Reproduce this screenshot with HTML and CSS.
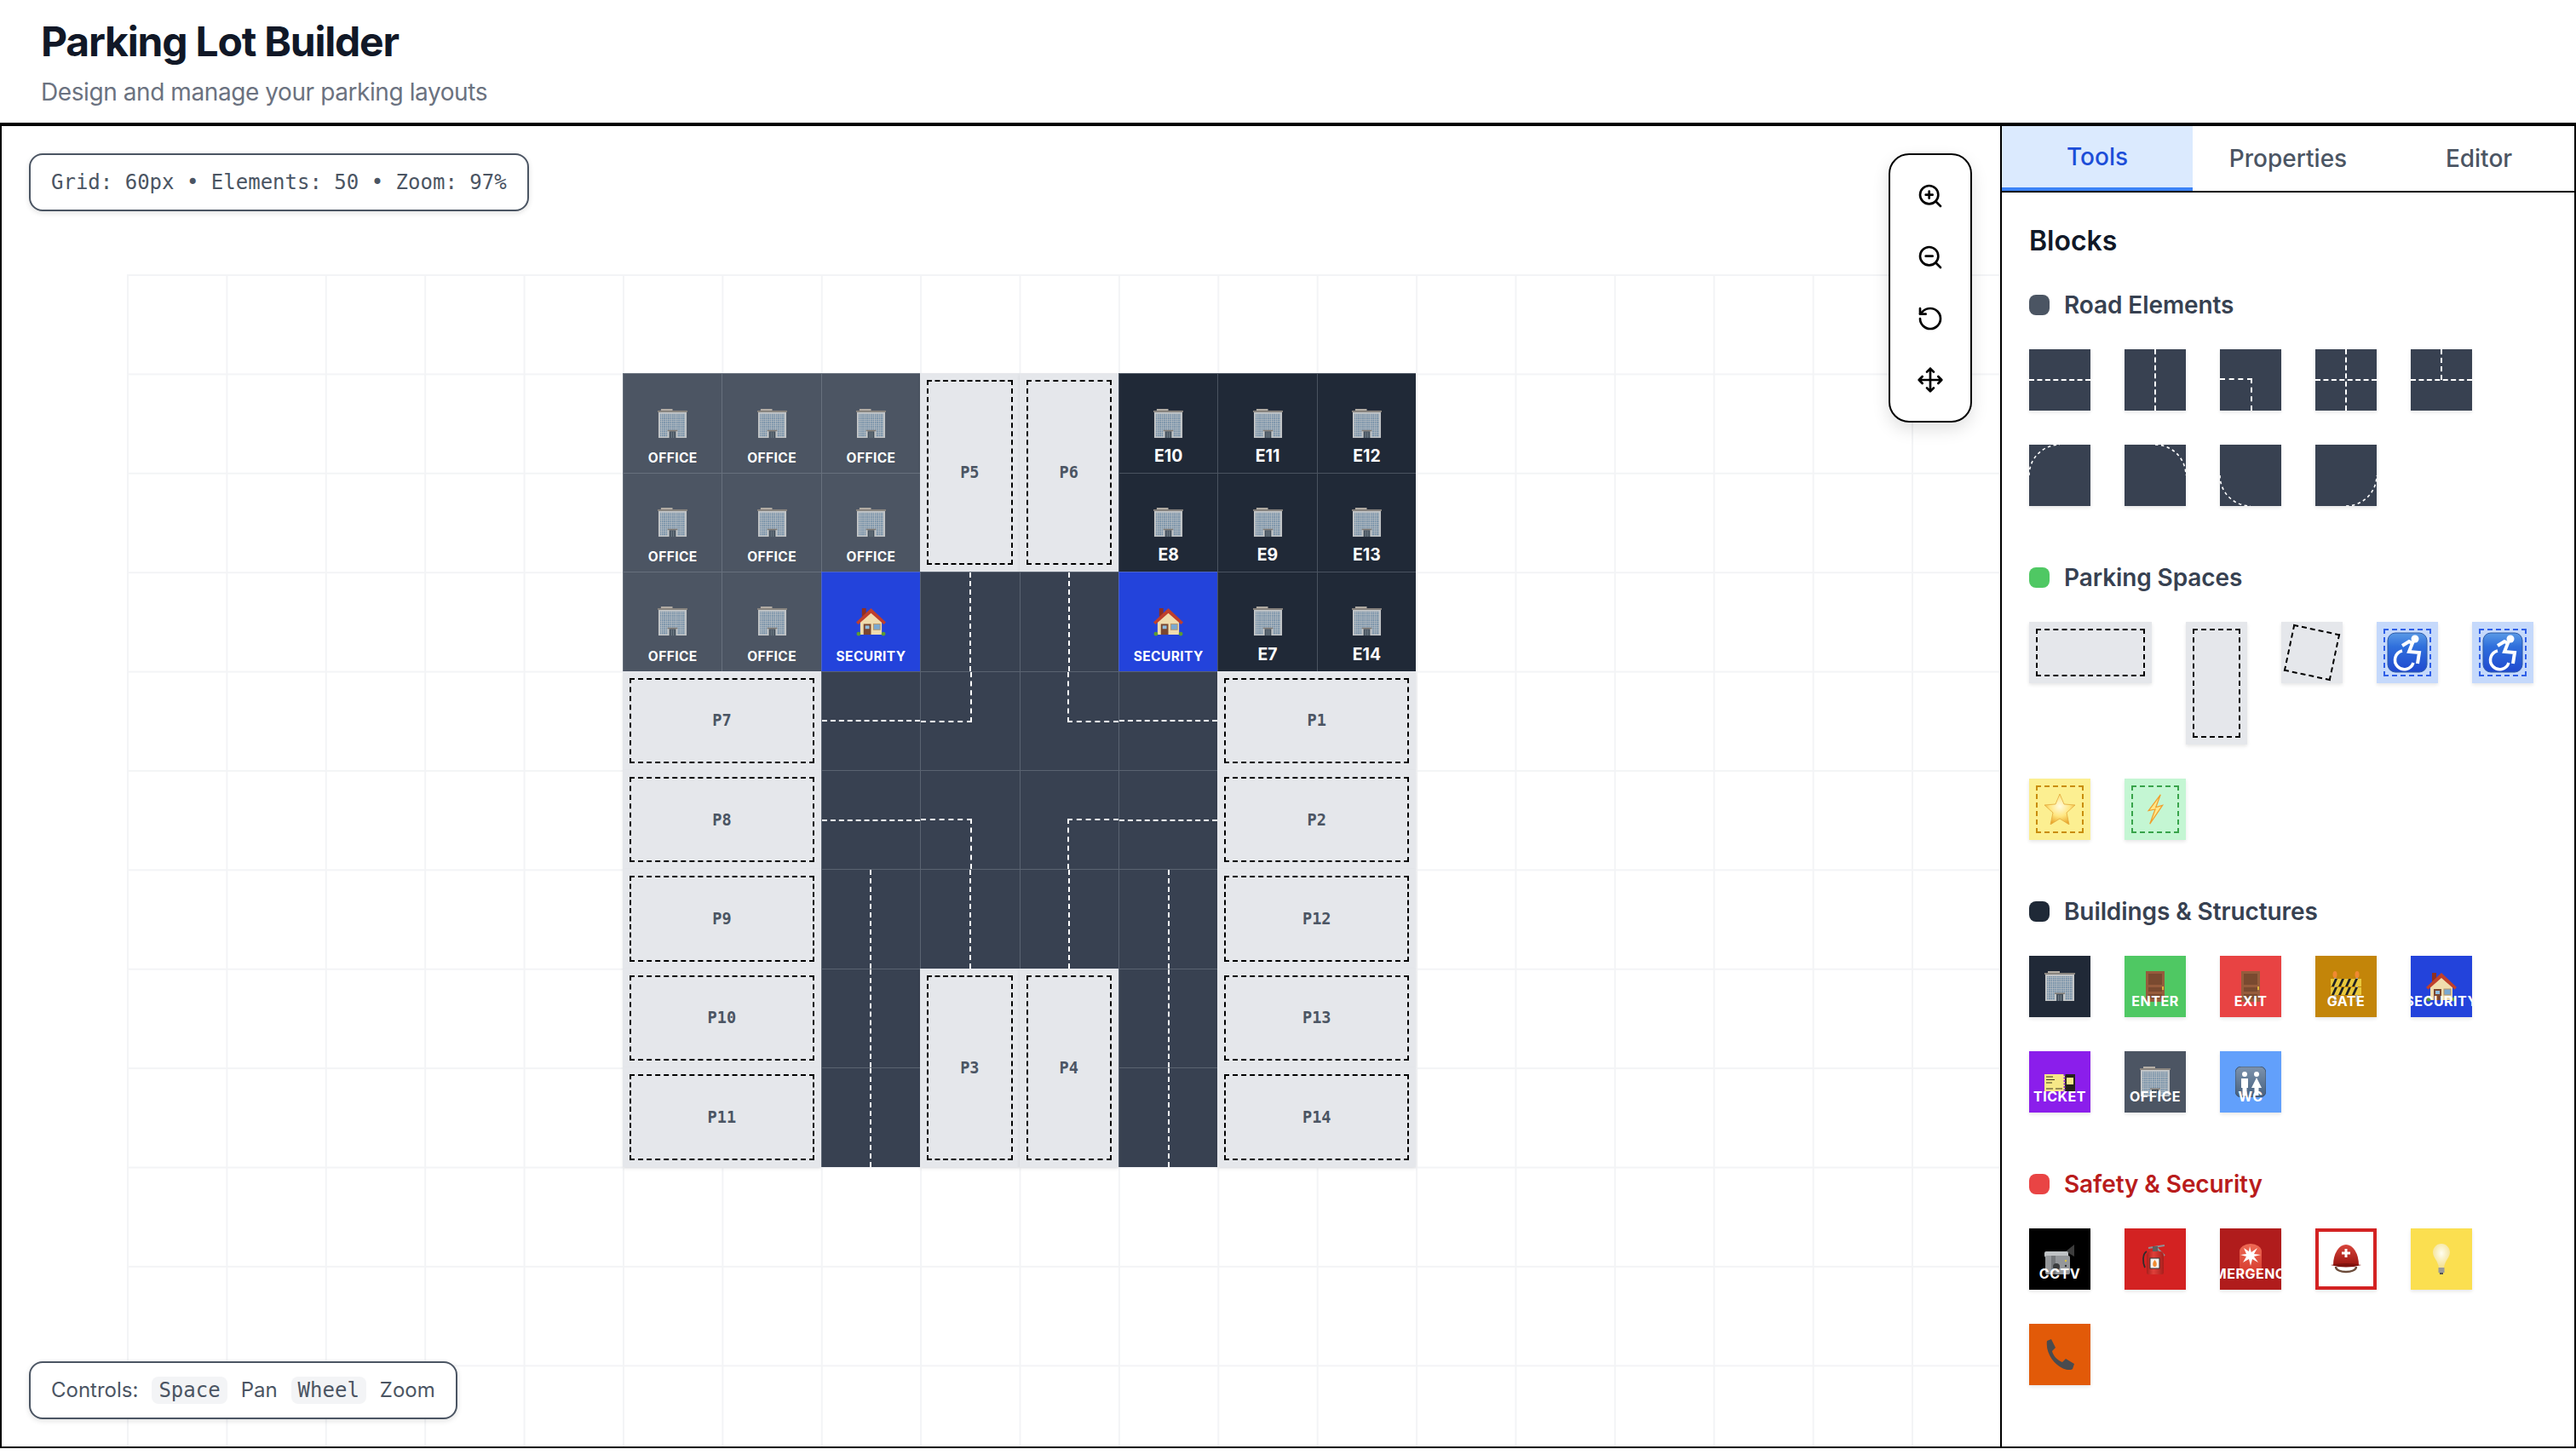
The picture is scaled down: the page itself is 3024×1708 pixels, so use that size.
FILE: index.html
```html
<!DOCTYPE html>
<html lang="en">
<head>
<meta charset="UTF-8">
<title>Parking Lot Builder</title>
<meta name="viewport" content="width=device-width, initial-scale=1.0">
<link rel="stylesheet" href="styles.css">
</head>
<body>

<!-- emoji drawings, reused below -->
<svg class="defs" aria-hidden="true">
  <defs>
    <pattern id="win" width="2.5" height="2.6" patternUnits="userSpaceOnUse"><rect width="1.9" height="2" fill="#7590a8"/></pattern>
    <linearGradient id="gblue" x1="0" y1="0" x2="0" y2="1"><stop offset="0" stop-color="#5a9ae6"/><stop offset=".35" stop-color="#2f6fdc"/><stop offset="1" stop-color="#2049cf"/></linearGradient>
    <linearGradient id="gwc" x1="0" y1="0" x2="0" y2="1"><stop offset="0" stop-color="#7d93ad"/><stop offset="1" stop-color="#46607e"/></linearGradient>
    <radialGradient id="gstar" cx=".5" cy=".4" r=".6"><stop offset="0" stop-color="#fffbe0"/><stop offset=".55" stop-color="#ffe680"/><stop offset="1" stop-color="#e9a52a"/></radialGradient>
    <radialGradient id="gbulb" cx=".5" cy=".4" r=".6"><stop offset="0" stop-color="#fffef0"/><stop offset="1" stop-color="#f3e08e"/></radialGradient>
    <linearGradient id="gsiren" x1="0" y1="0" x2="0" y2="1"><stop offset="0" stop-color="#ee6a55"/><stop offset="1" stop-color="#d5392c"/></linearGradient>
    <linearGradient id="ghelm" x1="0" y1="0" x2="0" y2="1"><stop offset="0" stop-color="#d8453c"/><stop offset="1" stop-color="#9c1712"/></linearGradient>
    <linearGradient id="gfire" x1="0" y1="0" x2="1" y2="0"><stop offset="0" stop-color="#a81f1c"/><stop offset=".4" stop-color="#e0403a"/><stop offset="1" stop-color="#a81f1c"/></linearGradient>
  </defs>
  <symbol id="i-office" viewBox="0 0 36 36">
    <rect x="4" width="14" height="2" fill="#b5afa6"/>
    <rect y="2" width="36" height="2" fill="#8a857f"/>
    <rect x="1" y="4" width="34" height="31" fill="#c2c5c7"/>
    <rect x="3" y="6" width="30" height="20" fill="url(#win)"/>
    <rect x="3" y="26" width="9" height="8" fill="url(#win)"/>
    <rect x="24" y="26" width="9" height="8" fill="url(#win)"/>
    <rect x="14" y="27" width="8" height="8" fill="#46525e"/>
    <rect x="12" y="25.500" width="12" height="1.500" fill="#7d7974"/>
    <path d="M16.700 28v7M19.300 28v7" stroke="#9aa6b0" stroke-width=".6"/>
  </symbol>
  <symbol id="i-house" viewBox="0 0 36 36">
    <rect x="7" y="2" width="5" height="10" fill="#8e2f22"/>
    <path d="M5 18v16h26V18L18 7z" fill="#f0dcae"/>
    <path d="M0 19L18 2l18 17-2.500 2.500L18 8 2.500 21.500z" fill="#bf3f2c"/>
    <rect x="9" y="21" width="9" height="13" fill="#7a4630"/>
    <rect x="11" y="23" width="5" height="4" fill="#8fbde0"/>
    <rect x="21" y="21" width="8" height="7" fill="#7aa9d2" stroke="#b4946a"/>
    <circle cx="3" cy="33" r="2.500" fill="#5c9a32"/>
    <circle cx="33" cy="33" r="2.500" fill="#5c9a32"/>
  </symbol>
  <symbol id="i-door" viewBox="0 0 36 36">
    <rect x="7" width="22" height="36" fill="#965c3c"/>
    <rect x="10" y="3" width="16" height="13" fill="#7a4a30"/>
    <rect x="10" y="19" width="16" height="5" fill="#7a4a30"/>
    <rect x="10" y="27" width="16" height="5" fill="#7a4a30"/>
    <rect x="26" y="18" width="2" height="4" fill="#e0b23c"/>
  </symbol>
  <symbol id="i-gate" viewBox="0 0 36 36">
    <ellipse cx="5" cy="4" rx="2.500" ry="4" fill="#f08a30"/>
    <ellipse cx="31" cy="4" rx="2.500" ry="4" fill="#f08a30"/>
    <rect x="4" y="8" width="2.500" height="28" fill="#a8a8a8"/>
    <rect x="29.500" y="8" width="2.500" height="28" fill="#a8a8a8"/>
    <rect y="9" width="36" height="9" fill="#e9c83c"/>
    <rect y="19" width="36" height="9" fill="#e9c83c"/>
    <path d="M1 18l4-9h3l-4 9zM9 18l4-9h3l-4 9zM17 18l4-9h3l-4 9zM25 18l4-9h3l-4 9zM1 28l4-9h3l-4 9zM9 28l4-9h3l-4 9zM17 28l4-9h3l-4 9zM25 28l4-9h3l-4 9z" fill="#222"/>
  </symbol>
  <symbol id="i-ticket" viewBox="0 0 36 36">
    <rect y="9" width="36" height="20" fill="#f6e887"/>
    <rect x="24" y="9" width="12" height="20" fill="#26231c"/>
    <rect x="26" y="13" width="8" height="8" fill="#f6e887"/>
    <path d="M2 12h8M2 15.500h10M2 19h7M2 26h8M13 26h8" stroke="#3a3420" stroke-width="1.200"/>
    <path d="M23.500 9v20" stroke="#8b2bd6" stroke-width="2" stroke-dasharray="2 1.500"/>
  </symbol>
  <symbol id="i-wc" viewBox="0 0 36 36">
    <rect width="36" height="36" rx="7" fill="url(#gwc)" stroke="#3d5068"/>
    <circle cx="11" cy="9" r="3" fill="#fff"/>
    <circle cx="25" cy="9" r="3" fill="#fff"/>
    <path d="M7 14h8v11h-1.500v9h-5v-9H7zM25 13l6 12h-3.500v9h-5v-9H19z" fill="#fff"/>
  </symbol>
  <symbol id="i-cctv" viewBox="0 0 36 36">
    <path d="M25 9l10-8v14z" fill="#3d3d3d"/>
    <rect y="9" width="28" height="7" rx="2" fill="#bfc2c4"/>
    <rect x="1" y="14" width="29" height="22" rx="2" fill="#94979a"/>
    <rect x="8" y="14" width="5" height="22" fill="#75787b"/>
    <circle cx="14" cy="27" r="4" fill="#3a3c3e"/>
    <circle cx="25" cy="20" r="1.200" fill="#d9c240"/>
    <circle cx="25" cy="26" r="1.200" fill="#333"/>
  </symbol>
  <symbol id="i-fire" viewBox="0 0 36 36">
    <path d="M8 9C3 12 3 22 6 28" stroke="#2d2d2d" stroke-width="1.800" fill="none"/>
    <path d="M10 5L29 2 M20 5l9 9" stroke="#8e9296" stroke-width="2.200" fill="none"/>
    <rect x="15" y="3" width="6" height="6" fill="#5e5e5e"/>
    <path d="M8 14a4 5 0 0 1 4-5h12a4 5 0 0 1 4 5v20a2 2 0 0 1-2 2H10a2 2 0 0 1-2-2z" fill="url(#gfire)"/>
    <rect x="12" y="17" width="11" height="12" fill="#f5f2ee" stroke="#333"/>
    <path d="M17.500 19c3 3 3 8 0 8s-3-5 0-8z" fill="#ee8a2f"/>
  </symbol>
  <symbol id="i-siren" viewBox="0 0 36 36">
    <path d="M5 9a13 9 0 0 1 26 0v27H5z" fill="url(#gsiren)"/>
    <path d="M17 3l1.800 7 7.200-5-4 7 8 1-8 2 5 7-7-4-2 8-2-8-7 4 4-7-7-2 7-1-3-7 6 4z" fill="#fff"/>
  </symbol>
  <symbol id="i-helmet" viewBox="0 0 36 36">
    <path d="M6 27c0 8 24 8 24 0" stroke="#6b4b3a" stroke-width="2.400" fill="none"/>
    <path d="M3 25a15 24 0 0 1 30 0z" fill="url(#ghelm)"/>
    <path d="M0 25q18-4 36 0q-18 5-36 0z" fill="#7f120e"/>
    <path d="M16.500 6h3v3.500H23v3h-3.500V16h-3v-3.500H13v-3h3.500z" fill="#fff"/>
  </symbol>
  <symbol id="i-bulb" viewBox="0 0 36 36">
    <path d="M18 0c-6 0-10 5-10 10 0 6 6 10 7 18h6c1-8 7-12 7-18 0-5-4-10-10-10z" fill="url(#gbulb)"/>
    <rect x="14.500" y="28" width="7" height="6" fill="#9a9a9a"/>
    <rect x="16" y="34" width="4" height="2" fill="#555"/>
  </symbol>
  <symbol id="i-phone" viewBox="0 0 36 36">
    <path d="M3 2L8 0l5 10-4 4c1 5 6 11 12 13l4-4 10 6-2 6c-3 2-8 1-12-1C11 29 1 16 3 2z" fill="#4a4b4e"/>
  </symbol>
  <symbol id="i-access" viewBox="0 0 48 48">
    <rect x="1" y="1" width="46" height="46" rx="9" fill="url(#gblue)" stroke="#2c5aa8"/>
    <circle cx="33" cy="8" r="4.500" fill="#fff"/>
    <path d="M18 16l8-5 4 2-4 10 12 1-2 13" stroke="#fff" stroke-width="4" fill="none"/>
    <path d="M18 22a11 11 0 1 0 13 14" stroke="#fff" stroke-width="3.500" fill="none"/>
  </symbol>
  <symbol id="i-star" viewBox="0 0 36 36">
    <path d="M18 0l5 12 13 1-10 9 3 14-11-7-11 7 3-14L0 13l13-1z" fill="url(#gstar)" stroke="#e2a83c" stroke-width=".8"/>
  </symbol>
  <symbol id="i-bolt" viewBox="0 0 24 46">
    <path d="M20 1L2 25l10-2-8 22L23 17l-10 3z" fill="#ffe88a" stroke="#ef9f2e" stroke-width="1.600"/>
  </symbol>
</svg>

<header class="page-header">
  <h1 class="page-title">Parking Lot Builder</h1>
  <p class="page-sub">Design and manage your parking layouts</p>
</header>

<main class="workspace">
  <section class="canvas">
    <div class="grid-bg">
      <div class="lot">
        <div class="cell office"><svg class="emoji"><use href="#i-office"/></svg><span class="cell-label">OFFICE</span></div>
        <div class="cell office"><svg class="emoji"><use href="#i-office"/></svg><span class="cell-label">OFFICE</span></div>
        <div class="cell office"><svg class="emoji"><use href="#i-office"/></svg><span class="cell-label">OFFICE</span></div>
        <div class="cell spot tall">P5</div>
        <div class="cell spot tall">P6</div>
        <div class="cell building"><svg class="emoji"><use href="#i-office"/></svg><span class="cell-label big">E10</span></div>
        <div class="cell building"><svg class="emoji"><use href="#i-office"/></svg><span class="cell-label big">E11</span></div>
        <div class="cell building"><svg class="emoji"><use href="#i-office"/></svg><span class="cell-label big">E12</span></div>

        <div class="cell office"><svg class="emoji"><use href="#i-office"/></svg><span class="cell-label">OFFICE</span></div>
        <div class="cell office"><svg class="emoji"><use href="#i-office"/></svg><span class="cell-label">OFFICE</span></div>
        <div class="cell office"><svg class="emoji"><use href="#i-office"/></svg><span class="cell-label">OFFICE</span></div>
        <div class="cell building"><svg class="emoji"><use href="#i-office"/></svg><span class="cell-label big">E8</span></div>
        <div class="cell building"><svg class="emoji"><use href="#i-office"/></svg><span class="cell-label big">E9</span></div>
        <div class="cell building"><svg class="emoji"><use href="#i-office"/></svg><span class="cell-label big">E13</span></div>

        <div class="cell office"><svg class="emoji"><use href="#i-office"/></svg><span class="cell-label">OFFICE</span></div>
        <div class="cell office"><svg class="emoji"><use href="#i-office"/></svg><span class="cell-label">OFFICE</span></div>
        <div class="cell security"><svg class="emoji"><use href="#i-house"/></svg><span class="cell-label">SECURITY</span></div>
        <div class="cell road"><i class="mark-v"></i></div>
        <div class="cell road"><i class="mark-v"></i></div>
        <div class="cell security"><svg class="emoji"><use href="#i-house"/></svg><span class="cell-label">SECURITY</span></div>
        <div class="cell building"><svg class="emoji"><use href="#i-office"/></svg><span class="cell-label big">E7</span></div>
        <div class="cell building"><svg class="emoji"><use href="#i-office"/></svg><span class="cell-label big">E14</span></div>

        <div class="cell spot wide">P7</div>
        <div class="cell road"><i class="mark-h"></i></div>
        <div class="cell road"><i class="mark-tl"></i></div>
        <div class="cell road"><i class="mark-tr"></i></div>
        <div class="cell road"><i class="mark-h"></i></div>
        <div class="cell spot wide">P1</div>

        <div class="cell spot wide">P8</div>
        <div class="cell road"><i class="mark-h"></i></div>
        <div class="cell road"><i class="mark-bl"></i></div>
        <div class="cell road"><i class="mark-br"></i></div>
        <div class="cell road"><i class="mark-h"></i></div>
        <div class="cell spot wide">P2</div>

        <div class="cell spot wide">P9</div>
        <div class="cell road"><i class="mark-v"></i></div>
        <div class="cell road"><i class="mark-v"></i></div>
        <div class="cell road"><i class="mark-v"></i></div>
        <div class="cell road"><i class="mark-v"></i></div>
        <div class="cell spot wide">P12</div>

        <div class="cell spot wide">P10</div>
        <div class="cell road"><i class="mark-v"></i></div>
        <div class="cell spot tall">P3</div>
        <div class="cell spot tall">P4</div>
        <div class="cell road"><i class="mark-v"></i></div>
        <div class="cell spot wide">P13</div>

        <div class="cell spot wide">P11</div>
        <div class="cell road"><i class="mark-v"></i></div>
        <div class="cell road"><i class="mark-v"></i></div>
        <div class="cell spot wide">P14</div>
      </div>
    </div>

    <div class="pill pill-info">Grid: 60px • Elements: 50 • Zoom: 97%</div>

    <div class="zoom-bar">
      <button class="zoom-btn"><svg viewBox="0 0 24 24"><circle cx="11" cy="11" r="8"/><path d="M21 21l-4.350-4.350M11 8v6M8 11h6"/></svg></button>
      <button class="zoom-btn"><svg viewBox="0 0 24 24"><circle cx="11" cy="11" r="8"/><path d="M21 21l-4.350-4.350M8 11h6"/></svg></button>
      <button class="zoom-btn"><svg viewBox="0 0 24 24"><path d="M3 12a9 9 0 1 0 9-9 9.750 9.750 0 0 0-6.740 2.740L3 8"/><path d="M3 3v5h5"/></svg></button>
      <button class="zoom-btn"><svg viewBox="0 0 24 24"><path d="M5 9l-3 3 3 3M9 5l3-3 3 3M15 19l-3 3-3-3M19 9l3 3-3 3M2 12h20M12 2v20"/></svg></button>
    </div>

    <div class="pill pill-controls">
      <span>Controls:</span><code class="key">Space</code><span>Pan</span><code class="key">Wheel</code><span>Zoom</span>
    </div>
  </section>

  <aside class="sidebar">
    <nav class="tabs">
      <div class="tab active">Tools</div>
      <div class="tab">Properties</div>
      <div class="tab">Editor</div>
    </nav>
    <div class="panel">
      <h2 class="panel-title">Blocks</h2>

      <h3 class="group-title"><span class="dot dot-road"></span>Road Elements</h3>
      <div class="blocks">
        <div class="block road"><i class="mark-h"></i></div>
        <div class="block road"><i class="mark-v"></i></div>
        <div class="block road"><i class="mark-bl"></i></div>
        <div class="block road"><i class="mark-h"></i><i class="mark-v"></i></div>
        <div class="block road"><i class="mark-h"></i><i class="mark-vtop"></i></div>
        <div class="block road"><svg class="curve" viewBox="0 0 72 72"><path d="M0 36A36 36 0 0 1 36 0"/></svg></div>
        <div class="block road"><svg class="curve" viewBox="0 0 72 72"><path d="M36 0A36 36 0 0 1 72 36"/></svg></div>
        <div class="block road"><svg class="curve" viewBox="0 0 72 72"><path d="M0 36A36 36 0 0 0 36 72"/></svg></div>
        <div class="block road"><svg class="curve" viewBox="0 0 72 72"><path d="M36 72A36 36 0 0 0 72 36"/></svg></div>
      </div>

      <h3 class="group-title"><span class="dot dot-park"></span>Parking Spaces</h3>
      <div class="blocks">
        <div class="block spot block-wide"></div>
        <div class="block spot block-tall"></div>
        <div class="block spot angled"></div>
        <div class="block spot accessible"><svg class="emoji-lg"><use href="#i-access"/></svg></div>
        <div class="block spot accessible"><svg class="emoji-lg"><use href="#i-access"/></svg></div>
        <div class="block spot vip"><svg class="emoji-sm"><use href="#i-star"/></svg></div>
        <div class="block spot ev"><svg class="emoji-sm"><use href="#i-bolt"/></svg></div>
      </div>

      <h3 class="group-title"><span class="dot dot-build"></span>Buildings &amp; Structures</h3>
      <div class="blocks">
        <div class="block building"><svg class="emoji-sm"><use href="#i-office"/></svg></div>
        <div class="block enter"><svg class="emoji-sm"><use href="#i-door"/></svg><span class="block-label">ENTER</span></div>
        <div class="block exit"><svg class="emoji-sm"><use href="#i-door"/></svg><span class="block-label">EXIT</span></div>
        <div class="block gate"><svg class="emoji-sm"><use href="#i-gate"/></svg><span class="block-label">GATE</span></div>
        <div class="block security"><svg class="emoji-sm"><use href="#i-house"/></svg><span class="block-label">SECURITY</span></div>
        <div class="block ticket"><svg class="emoji-sm"><use href="#i-ticket"/></svg><span class="block-label">TICKET</span></div>
        <div class="block office"><svg class="emoji-sm"><use href="#i-office"/></svg><span class="block-label">OFFICE</span></div>
        <div class="block wc"><svg class="emoji-sm"><use href="#i-wc"/></svg><span class="block-label">WC</span></div>
      </div>

      <h3 class="group-title danger"><span class="dot dot-safe"></span>Safety &amp; Security</h3>
      <div class="blocks">
        <div class="block cctv"><svg class="emoji-sm"><use href="#i-cctv"/></svg><span class="block-label">CCTV</span></div>
        <div class="block fire"><svg class="emoji-sm"><use href="#i-fire"/></svg></div>
        <div class="block emergency"><svg class="emoji-sm"><use href="#i-siren"/></svg><span class="block-label">EMERGENCY</span></div>
        <div class="block firstaid"><svg class="emoji-sm"><use href="#i-helmet"/></svg></div>
        <div class="block light"><svg class="emoji-sm"><use href="#i-bulb"/></svg></div>
        <div class="block phone"><svg class="emoji-sm"><use href="#i-phone"/></svg></div>
      </div>
    </div>
  </aside>
</main>

</body>
</html>
```

FILE: styles.css
```css
body {
  margin: 0;
  background-color: #fff;
  font-family: Inter, "Noto Sans", sans-serif;
  color: #111827;
}
.defs {
  position: absolute;
  width: 0;
  height: 0;
}

/* header */
.page-header {
  height: 112px;
  padding: 17px 48px 15px;
  border-bottom: 2px solid #000;
}
.page-title {
  margin: 0;
  font-size: 48px;
  line-height: 64px;
  font-weight: 700;
  letter-spacing: -1.2px;
}
.page-sub {
  margin: 7px 0 0;
  font-size: 28px;
  line-height: 40px;
  letter-spacing: -0.42px;
  color: #6b7280;
}

/* main */
.workspace {
  display: flex;
  height: 1550px;
  border: 2px solid #000;
}
.canvas {
  position: relative;
  flex: 1;
  overflow: hidden;
}
.grid-bg {
  position: absolute;
  left: 147px;
  top: 174px;
  right: 0;
  bottom: 0;
  padding: 116.4px 0 0 582px;
  background-image: linear-gradient(#f3f4f6 2px, transparent 2px), linear-gradient(90deg, #f3f4f6 2px, transparent 2px);
  background-size: 116.4px 116.4px;
}
.lot {
  display: grid;
  grid-template-columns: repeat(8, 116.4px);
  grid-auto-rows: 116.4px;
}

.cell {
  position: relative;
  box-sizing: border-box;
  display: flex;
  align-items: center;
  justify-content: center;
  border-style: solid;
  border-width: 1px 0 0 1px;
  border-color: rgba(156, 163, 175, 0.35);
}
.cell.spot { border: none; }
.cell.wide { grid-column: span 2; }
.cell.tall { grid-row: span 2; }
.emoji {
  width: 35px;
  height: 35px;
}
.cell-label {
  position: absolute;
  left: 0;
  right: 0;
  bottom: 7px;
  text-align: center;
  font-size: 15.5px;
  line-height: 20px;
  font-weight: 700;
  letter-spacing: 0.4px;
  color: #fff;
}
.cell-label.big {
  font-size: 19.4px;
  bottom: 10px;
  letter-spacing: 0;
}

/* shared colours */
.office { background-color: #4c5563; }
.building { background-color: #202937; }
.security { background-color: #2343db; }
.road { background-color: #384151; }

.spot {
  position: relative;
  background-color: #e5e7eb;
  font-family: "DejaVu Sans Mono", monospace;
  font-size: 18.6px;
  font-weight: 700;
  color: #4b5563;
  box-shadow: 0 2px 4px rgba(0, 0, 0, 0.08);
}
.spot::before {
  content: "";
  position: absolute;
  inset: 8px;
  border: 2px dashed #000;
}

/* road markings */
.road { position: relative; overflow: hidden; }
.road i { position: absolute; box-sizing: content-box; }
.mark-h {
  left: 0;
  right: 0;
  top: calc(50% - 1px);
  border-top: 2px dashed #fff;
}
.mark-v {
  top: 0;
  bottom: 0;
  left: calc(50% - 1px);
  border-left: 2px dashed #fff;
}
.mark-vtop {
  top: 0;
  height: 50%;
  left: calc(50% - 1px);
  border-left: 2px dashed #fff;
}
.mark-tl {
  left: 0;
  top: 0;
  width: 50%;
  height: 50%;
  border-right: 2px dashed #fff;
  border-bottom: 2px dashed #fff;
}
.mark-tr {
  right: 0;
  top: 0;
  width: 50%;
  height: 50%;
  border-left: 2px dashed #fff;
  border-bottom: 2px dashed #fff;
}
.mark-bl {
  left: 0;
  bottom: 0;
  width: 50%;
  height: 50%;
  border-right: 2px dashed #fff;
  border-top: 2px dashed #fff;
}
.mark-br {
  right: 0;
  bottom: 0;
  width: 50%;
  height: 50%;
  border-left: 2px dashed #fff;
  border-top: 2px dashed #fff;
}
.curve {
  display: block;
  width: 72px;
  height: 72px;
}
.curve path {
  fill: none;
  stroke: #fff;
  stroke-width: 1.6;
  stroke-dasharray: 3.5 3.5;
}

/* floating boxes */
.pill {
  position: absolute;
  left: 32px;
  box-sizing: border-box;
  height: 68px;
  padding: 16px 24px;
  background-color: #fff;
  border: 2px solid #4b5563;
  border-radius: 16px;
  box-shadow: 0 2px 6px rgba(0, 0, 0, 0.12);
  font-size: 24px;
  line-height: 32px;
  color: #4b5563;
}
.pill-info {
  top: 32px;
  font-family: "DejaVu Sans Mono", monospace;
}
.pill-controls {
  bottom: 32px;
  display: flex;
  align-items: center;
  gap: 16px;
}
.key {
  padding: 0 8px;
  background-color: #f3f4f6;
  border-radius: 8px;
  font-family: "DejaVu Sans Mono", monospace;
}
.zoom-bar {
  position: absolute;
  top: 32px;
  right: 33px;
  box-sizing: border-box;
  width: 98px;
  display: flex;
  flex-direction: column;
  gap: 8px;
  padding: 16px 15px;
  background-color: #fff;
  border: 2px solid #000;
  border-radius: 24px;
  box-shadow: 0 8px 20px rgba(0, 0, 0, 0.12);
}
.zoom-btn {
  display: flex;
  align-items: center;
  justify-content: center;
  height: 64px;
  padding: 0;
  border: none;
  background: none;
}
.zoom-btn svg {
  width: 32px;
  height: 32px;
  fill: none;
  stroke: #000;
  stroke-width: 2;
  stroke-linecap: round;
  stroke-linejoin: round;
}

/* sidebar */
.sidebar {
  width: 672px;
  border-left: 2px solid #000;
  overflow: hidden;
}
.tabs {
  display: flex;
  height: 76px;
  border-bottom: 2px solid #000;
}
.tab {
  flex: 1;
  display: flex;
  align-items: center;
  justify-content: center;
  font-size: 28px;
  font-weight: 500;
  color: #4b5563;
}
.tab.active {
  background-color: #dbeafe;
  border-bottom: 4px solid #3b82f6;
  color: #1d4ed8;
}
.panel {
  padding: 32px;
}
.panel-title {
  margin: 0 0 30px;
  font-size: 32px;
  line-height: 50px;
  font-weight: 600;
}
.group-title {
  display: flex;
  align-items: center;
  gap: 17px;
  margin: 64px 0 32px;
  font-size: 28px;
  line-height: 40px;
  font-weight: 600;
  letter-spacing: -0.1px;
  color: #374151;
}
.panel-title + .group-title { margin-top: 0; }
.group-title.danger { color: #b91c1c; }
.dot {
  width: 24px;
  height: 24px;
  border-radius: 8px;
}
.dot-road { background-color: #4b5563; }
.dot-park { background-color: #4fc863; }
.dot-build { background-color: #1f2937; }
.dot-safe { background-color: #e94444; }

.blocks {
  display: flex;
  flex-wrap: wrap;
  align-items: flex-start;
  gap: 40px;
}
.block {
  position: relative;
  flex: none;
  box-sizing: border-box;
  width: 72px;
  height: 72px;
  display: flex;
  align-items: center;
  justify-content: center;
  overflow: hidden;
  box-shadow: 0 2px 4px rgba(0, 0, 0, 0.1);
}
.block-wide { width: 144px; }
.block-tall { height: 144px; }
.block.angled::before { transform: rotate(12deg); }
.emoji-sm {
  width: 36px;
  height: 36px;
}
.emoji-lg {
  width: 48px;
  height: 48px;
}
.block-label {
  position: absolute;
  left: -20px;
  right: -20px;
  bottom: 9px;
  text-align: center;
  font-size: 16px;
  line-height: 20px;
  font-weight: 700;
  letter-spacing: 0.5px;
  color: #fff;
}
.accessible { background-color: #c5d9fb; }
.accessible::before { border-color: #2f5fe8 !important; }
.vip { background-color: #fcef91; }
.vip::before { border-color: #c98d0c !important; }
.ev { background-color: #c4f6d3; }
.ev::before { border-color: #38a34a !important; }
.enter { background-color: #4fc863; }
.exit { background-color: #e84343; }
.gate { background-color: #c38509; }
.ticket { background-color: #8b1eeb; }
.wc { background-color: #62a0fb; }
.cctv { background-color: #000; }
.fire { background-color: #d32222; }
.emergency { background-color: #b01c1c; }
.firstaid {
  background-color: #fff;
  border: 4px solid #d32222;
}
.light { background-color: #fbdf50; }
.phone { background-color: #e25a08; }
```
